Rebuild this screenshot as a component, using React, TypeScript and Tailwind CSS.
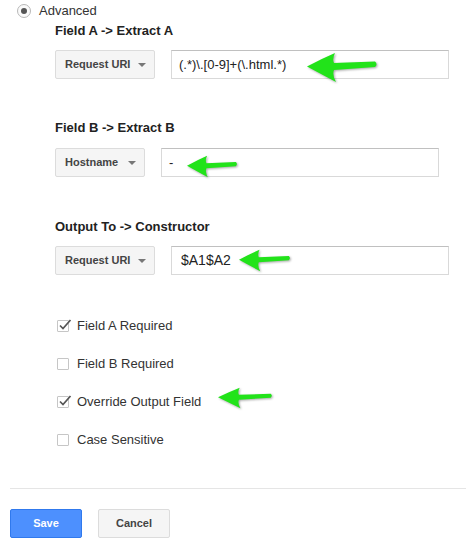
import React from "react";

const font = { fontFamily: '"Liberation Sans", Arial, sans-serif' };

function Arrow({ left, top, w, h }: { left: number; top: number; w: number; h: number }) {
  return (
    <svg
      className="absolute"
      style={{ left, top, width: w, height: h, filter: "drop-shadow(1px 1.5px 1px rgba(0,0,0,0.35))" }}
      viewBox="0 0 71 31"
      preserveAspectRatio="none"
    >
      <path
        d="M0,14.5 Q14,7 28,1 Q25,7 27,11 L68,9.5 Q71,12 68,15 L27,18 Q25,23 29,30 Q14,22 0,14.5 Z"
        fill="#22e31a"
      />
    </svg>
  );
}

function Select({ label, w }: { label: string; w: string }) {
  return (
    <div
      className={`${w} h-[29px] shrink-0 flex items-center justify-between pl-[9px] pr-[8px] bg-[#f5f5f5] border border-[#dcdcdc] rounded-[2px]`}
    >
      <span className="text-[11px] font-bold text-[#444]">{label}</span>
      <span className="w-0 h-0 border-l-[4px] border-r-[4px] border-t-[4px] border-l-transparent border-r-transparent border-t-[#777]" />
    </div>
  );
}

function Input({ value, size }: { value: string; size: string }) {
  return (
    <div className={`w-[278px] h-[29px] flex items-center pl-[7px] border border-[#d9d9d9] border-t-[#c0c0c0] bg-white ${size} text-[#222]`}>
      {value}
    </div>
  );
}

function Check({ checked, label }: { checked: boolean; label: string }) {
  return (
    <div className="h-[38px] flex items-center pl-[57px]">
      <div className="relative w-[12px] h-[12px] border border-[#c6c6c6] rounded-[1px] bg-white">
        {checked && (
          <svg className="absolute left-[0px] top-[-3px]" width="14" height="14" viewBox="0 0 14 14">
            <path d="M2,7.5 L5,10.5 L12.5,2" fill="none" stroke="#555" strokeWidth="1.7" />
          </svg>
        )}
      </div>
      <span className="ml-[8px] text-[13px] text-[#333]">{label}</span>
    </div>
  );
}

export default function App() {
  return (
    <div className="relative w-[466px] h-[550px] bg-white overflow-hidden" style={font}>
      <div className="h-[22px] flex items-center pl-[17px]">
        <div className="w-[14px] h-[14px] rounded-full border border-[#b8b8b8] bg-[#fafafa] flex items-center justify-center">
          <div className="w-[6px] h-[6px] rounded-full bg-[#555]" />
        </div>
        <span className="ml-[8px] text-[13px] text-[#333]">Advanced</span>
      </div>

      <div className="pl-[55px]">
        <div className="mt-[1px] h-4 leading-4 text-[13px] font-bold text-[#222]">Field A -&gt; Extract A</div>
        <div className="mt-[11px] flex gap-[16px]">
          <Select label="Request URI" w="w-[100px]" />
          <Input value="(.*)\.[0-9]+(\.html.*)" size="text-[13px]" />
        </div>

        <div className="mt-[41px] h-4 leading-4 text-[13px] font-bold text-[#222]">Field B -&gt; Extract B</div>
        <div className="mt-[12px] flex gap-[16px]">
          <Select label="Hostname" w="w-[90px]" />
          <Input value="-" size="text-[13px]" />
        </div>

        <div className="mt-[42px] h-4 leading-4 text-[13px] font-bold text-[#222]">Output To -&gt; Constructor</div>
        <div className="mt-[11px] flex gap-[16px]">
          <Select label="Request URI" w="w-[100px]" />
          <Input value="$A1$A2" size="text-[14px] pl-[9px]" />
        </div>
      </div>

      <div className="mt-[32px]">
        <Check checked label="Field A Required" />
        <Check checked={false} label="Field B Required" />
        <Check checked label="Override Output Field" />
        <Check checked={false} label="Case Sensitive" />
      </div>

      <div className="mt-[29px] ml-[10px] h-px bg-[#e5e5e5]" />

      <div className="mt-[20px] pl-[10px] flex gap-[16px]">
        <button className="w-[72px] h-[29px] rounded-[2px] bg-[#4d90fe] border border-[#3079ed] text-white text-[11px] font-bold">
          Save
        </button>
        <button className="w-[72px] h-[29px] rounded-[2px] bg-[#f5f5f5] border border-[#dcdcdc] text-[#444] text-[11px] font-bold">
          Cancel
        </button>
      </div>

      <Arrow left={307} top={52} w={71} h={31} />
      <Arrow left={187} top={155} w={51} h={23} />
      <Arrow left={239} top={249} w={52} h={23} />
      <Arrow left={218} top={387} w={55} h={22} />
    </div>
  );
}
